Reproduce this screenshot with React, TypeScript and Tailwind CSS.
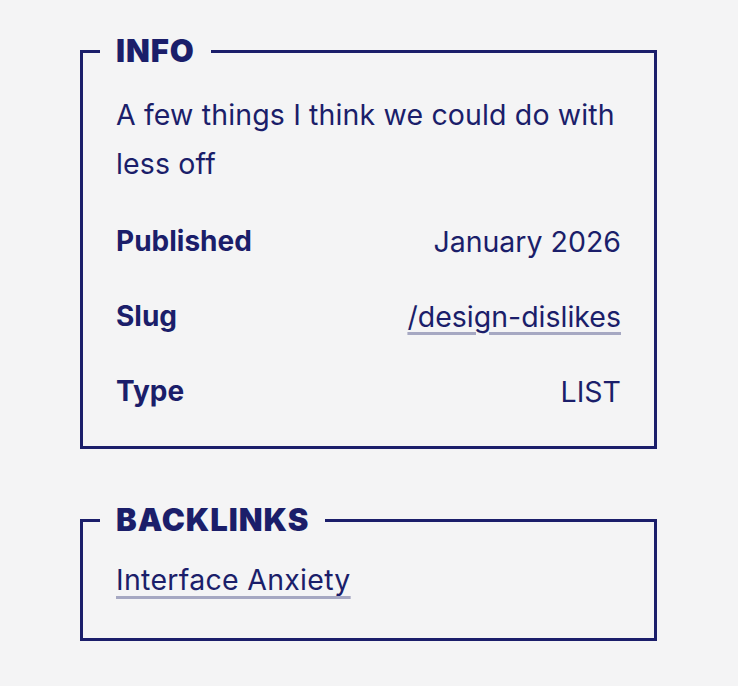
const details = [
  { label: "Published", value: "January 2026" },
  { label: "Slug", value: "/design-dislikes", href: "#" },
  { label: "Type", value: "LIST" },
];

function Panel({
  title,
  className,
  children,
}: {
  title: string;
  className?: string;
  children: React.ReactNode;
}) {
  return (
    <fieldset
      className={`m-0 min-w-0 border-[3px] border-[#1b1e6a] pl-[17px] pr-[33px] ${className ?? ""}`}
    >
      <legend className="px-4 text-[31px] font-black leading-[36px] tracking-[0.03em]">
        {title}
      </legend>
      <div className="pl-4">{children}</div>
    </fieldset>
  );
}

export default function App() {
  return (
    <div
      className="min-h-screen bg-[#f4f4f5] px-[80px] pt-[33px] text-[#1b1e6a]"
      style={{ fontFamily: "Inter, 'Noto Sans', sans-serif" }}
    >
      <div className="w-[577px]">
        <Panel title="INFO" className="pt-[21px] pb-[30px]">
          <p className="text-[28.5px] leading-[49px] tracking-[0.005em]">
            A few things I think we could do with less off
          </p>
          <dl className="mt-[29px] flex flex-col gap-[26px]">
            {details.map((d) => (
              <div
                key={d.label}
                className="flex h-[49px] items-center justify-between text-[28.5px] leading-[49px]"
              >
                <dt className="text-[28px] font-bold">{d.label}</dt>
                <dd>
                  {d.href ? (
                    <a
                      href={d.href}
                      className="underline decoration-[#a6a8c2] decoration-[3px] underline-offset-[5px]"
                    >
                      {d.value}
                    </a>
                  ) : (
                    d.value
                  )}
                </dd>
              </div>
            ))}
          </dl>
        </Panel>

        <Panel title="BACKLINKS" className="mt-[53px] pt-[17px] pb-[34px]">
          <a
            href="#"
            className="text-[28.5px] leading-[49px] tracking-[0.01em] underline decoration-[#a6a8c2] decoration-[3px] underline-offset-[6px]"
          >
            Interface Anxiety
          </a>
        </Panel>
      </div>
    </div>
  );
}
